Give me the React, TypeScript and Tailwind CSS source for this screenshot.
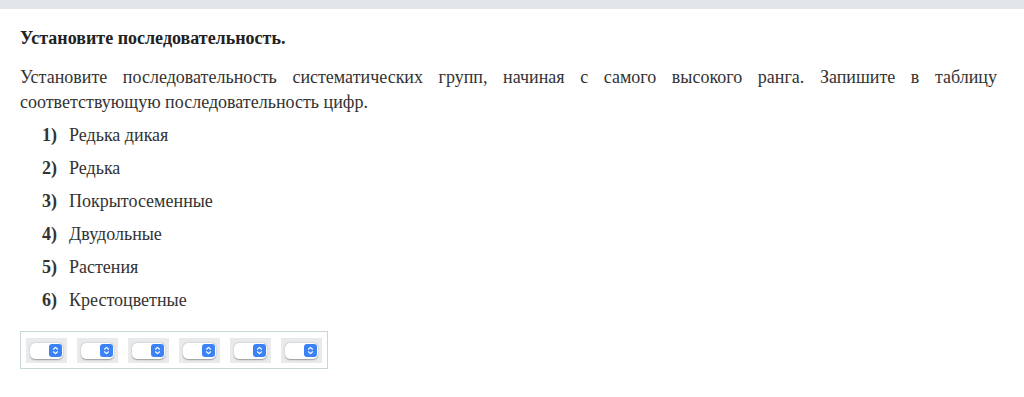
import React from "react";

const items = [
  "Редька дикая",
  "Редька",
  "Покрытосеменные",
  "Двудольные",
  "Растения",
  "Крестоцветные",
];

function FakeSelect() {
  return (
    <div className="bg-[#e8eaeb] w-[41px] h-[25px] flex items-center justify-center">
      <div className="w-[33px] h-[16px] bg-white rounded-[5px] shadow-[0_0.5px_1.5px_rgba(0,0,0,0.35)] flex items-center justify-end pr-[1.5px]">
        <div className="w-[13px] h-[13px] bg-[#3b82f6] rounded-[3px] flex items-center justify-center">
          <svg width="7" height="9" viewBox="0 0 7 9" fill="none">
            <path d="M1.5 3.2 L3.5 1.4 L5.5 3.2" stroke="white" strokeWidth="1.2" strokeLinecap="round" strokeLinejoin="round" />
            <path d="M1.5 5.8 L3.5 7.6 L5.5 5.8" stroke="white" strokeWidth="1.2" strokeLinecap="round" strokeLinejoin="round" />
          </svg>
        </div>
      </div>
    </div>
  );
}

export default function App() {
  return (
    <div className="w-[1024px] h-[397px] bg-white text-[#222] font-['Liberation_Serif','Times_New_Roman',serif]">
      <div className="h-[9px] bg-[#e3e6e8]" />
      <div className="pl-[20px] pr-[27px]">
        <div className="pt-[19px] text-[18px] font-bold leading-[20px]">Установите последовательность.</div>
        <p className="mt-[17px] text-[18px] leading-[25px] text-justify text-[#333]">
          Установите последовательность систематических групп, начиная с самого высокого ранга. Запишите в таблицу соответствующую последовательность цифр.
        </p>
        <div className="mt-[10px] flex flex-col gap-[13px] pl-[22px] text-[18px] leading-[20px] text-[#333]">
          {items.map((t, i) => (
            <div key={i} className="flex">
              <span className="w-[27px] font-bold">{i + 1})</span>
              <span>{t}</span>
            </div>
          ))}
        </div>
        <div className="mt-[21px] inline-flex gap-[10px] border border-[#c5d8d7] px-[5px] pt-[6px] pb-[5px]">
          {items.map((_, i) => (
            <FakeSelect key={i} />
          ))}
        </div>
      </div>
    </div>
  );
}
